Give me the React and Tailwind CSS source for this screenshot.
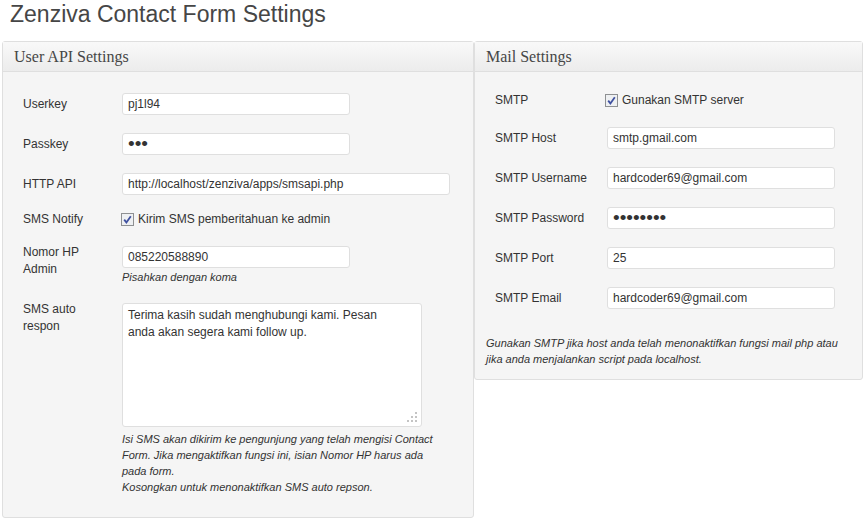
import React from 'react';

const CheckBox = () => (
  <svg width="13" height="13" viewBox="0 0 13 13" className="shrink-0">
    <rect x="0.5" y="0.5" width="12" height="12" fill="#eef0f2" stroke="#8e9092" />
    <path d="M3.2 6.6 L5.4 9.4 L9.8 3.2" stroke="#3f51a0" strokeWidth="1.8" fill="none" />
  </svg>
);

const Field = ({ value, type = 'text', w = 'w-[228px]' }) => (
  <input
    type={type}
    readOnly
    defaultValue={value}
    className={`${w} h-[22px] block rounded-[3px] border border-[#dfdfdf] bg-white px-[5px] ${
      type === 'password' ? 'text-[19px]' : 'text-[12px]'
    } text-[#333] outline-none`}
  />
);

function Panel({ title, className, children }) {
  return (
    <div className={`rounded-[3px] border border-[#dfdfdf] bg-[#f5f5f5] ${className}`}>
      <div className="h-[30px] border-b border-[#dfdfdf] bg-linear-to-b from-[#f9f9f9] to-[#ececec] pl-[11px] font-['Liberation_Serif',Georgia,serif] text-[16px] leading-[30px] text-[#464646]">
        {title}
      </div>
      {children}
    </div>
  );
}

function Row({ label, labelW, labelPt = 'pt-[3px]', className = '', children }) {
  return (
    <div className={`flex items-start ${className}`}>
      <div className={`${labelW} shrink-0 leading-[17px] ${labelPt}`}>{label}</div>
      <div>{children}</div>
    </div>
  );
}

export default function App() {
  return (
    <div className="w-[865px] h-[523px] overflow-hidden bg-white font-['Liberation_Sans',Arial,sans-serif] text-[12px] text-[#333]">
      <h2 className="pl-[10px] pt-[1px] text-[23px] leading-[26px] text-[#464646]">Zenziva Contact Form Settings</h2>

      <div className="mt-[14px] flex items-start pl-[2px]">
        {/* User API */}
        <Panel title="User API Settings" className="w-[472px]">
          <div className="pl-[20px] pt-[21px] pb-[22px]">
            <Row label="Userkey" labelW="w-[99px]">
              <Field value="pj1l94" />
            </Row>
            <Row label="Passkey" labelW="w-[99px]" className="mt-[18px]">
              <Field value="abc" type="password" />
            </Row>
            <Row label="HTTP API" labelW="w-[99px]" className="mt-[18px]">
              <Field value="http://localhost/zenziva/apps/smsapi.php" w="w-[328px]" />
            </Row>
            <Row label="SMS Notify" labelW="w-[99px]" labelPt="pt-0" className="mt-[16px]">
              <div className="flex items-center gap-[4px] leading-[17px] -ml-[1px]">
                <CheckBox />
                <span>Kirim SMS pemberitahuan ke admin</span>
              </div>
            </Row>
            <Row label={<>Nomor HP<br />Admin</>} labelW="w-[99px]" labelPt="pt-0" className="mt-[16px]">
              <div className="mt-[2px]">
                <Field value="085220588890" />
              </div>
              <p className="mt-[1px] text-[11px] italic leading-[17px] text-[#333]">Pisahkan dengan koma</p>
            </Row>
            <Row label={<>SMS auto<br />respon</>} labelW="w-[99px]" labelPt="pt-0" className="mt-[15px]">
              <div className="relative mt-[2px] h-[124px] w-[300px] rounded-[3px] border border-[#dfdfdf] bg-white px-[5px] pt-[3px] leading-[17px]">
                Terima kasih sudah menghubungi kami. Pesan
                <br />
                anda akan segera kami follow up.
                <svg width="12" height="12" viewBox="0 0 12 12" className="absolute bottom-[3px] right-[3px]">
                  <g fill="#c4c4c4">
                    <rect x="9" y="1" width="2" height="2" />
                    <rect x="5" y="5" width="2" height="2" />
                    <rect x="9" y="5" width="2" height="2" />
                    <rect x="1" y="9" width="2" height="2" />
                    <rect x="5" y="9" width="2" height="2" />
                    <rect x="9" y="9" width="2" height="2" />
                  </g>
                </svg>
              </div>
              <p className="mt-[4px] whitespace-nowrap text-[11px] italic leading-[16px]">
                Isi SMS akan dikirim ke pengunjung yang telah mengisi Contact
                <br />
                Form. Jika mengaktifkan fungsi ini, isian Nomor HP harus ada
                <br />
                pada form.
                <br />
                Kosongkan untuk menonaktifkan SMS auto repson.
              </p>
            </Row>
          </div>
        </Panel>

        {/* Mail */}
        <Panel title="Mail Settings" className="w-[389px]">
          <div className="pl-[20px] pt-[20px]">
            <Row label="SMTP" labelW="w-[112px]" labelPt="pt-0">
              <div className="flex items-center gap-[4px] leading-[17px] -ml-[2px]">
                <CheckBox />
                <span>Gunakan SMTP server</span>
              </div>
            </Row>
            <Row label="SMTP Host" labelW="w-[112px]" className="mt-[18px]">
              <Field value="smtp.gmail.com" />
            </Row>
            <Row label="SMTP Username" labelW="w-[112px]" className="mt-[18px]">
              <Field value="hardcoder69@gmail.com" />
            </Row>
            <Row label="SMTP Password" labelW="w-[112px]" className="mt-[18px]">
              <Field value="abcdefgh" type="password" />
            </Row>
            <Row label="SMTP Port" labelW="w-[112px]" className="mt-[18px]">
              <Field value="25" />
            </Row>
            <Row label="SMTP Email" labelW="w-[112px]" className="mt-[18px]">
              <Field value="hardcoder69@gmail.com" />
            </Row>
          </div>
          <p className="mt-[26px] whitespace-nowrap px-[11px] pb-[12px] text-[11px] italic leading-[16px]">
            Gunakan SMTP jika host anda telah menonaktifkan fungsi mail php atau
            <br />
            jika anda menjalankan script pada localhost.
          </p>
        </Panel>
      </div>
    </div>
  );
}
